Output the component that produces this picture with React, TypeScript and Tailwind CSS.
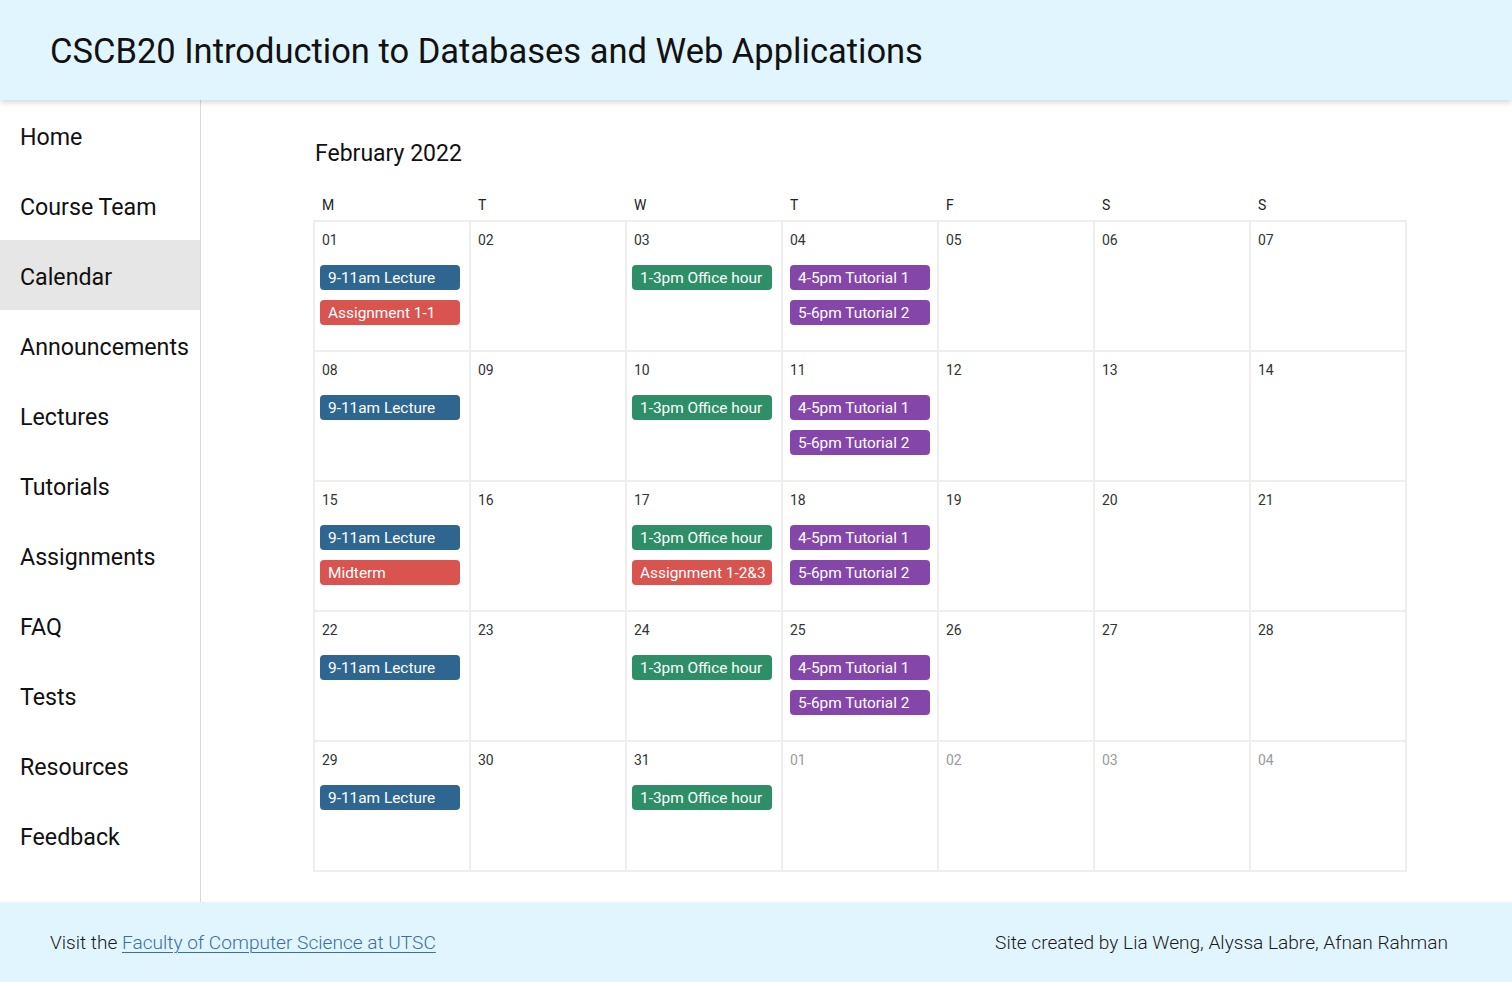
import React from 'react';

type Kind = 'lecture' | 'assignment' | 'office' | 'tutorial';

interface CalEvent {
  label: string;
  kind: Kind;
}

interface Day {
  num: string;
  muted?: boolean;
  events: CalEvent[];
}

const navItems = [
  'Home',
  'Course Team',
  'Calendar',
  'Announcements',
  'Lectures',
  'Tutorials',
  'Assignments',
  'FAQ',
  'Tests',
  'Resources',
  'Feedback',
];

const weekdays = ['M', 'T', 'W', 'T', 'F', 'S', 'S'];

const kindClass: Record<Kind, string> = {
  lecture: 'bg-[#2e6690]',
  assignment: 'bg-[#d9534f]',
  office: 'bg-[#2e8e67]',
  tutorial: 'bg-[#8446a8]',
};

const lecture: CalEvent = { label: '9-11am Lecture', kind: 'lecture' };
const office: CalEvent = { label: '1-3pm Office hour', kind: 'office' };
const tut1: CalEvent = { label: '4-5pm Tutorial 1', kind: 'tutorial' };
const tut2: CalEvent = { label: '5-6pm Tutorial 2', kind: 'tutorial' };

const buildDays = (): Day[] => {
  const days: Day[] = [];
  for (let i = 1; i <= 28; i++) {
    const dow = (i - 1) % 7;
    const events: CalEvent[] = [];
    if (dow === 0) events.push(lecture);
    if (dow === 2) events.push(office);
    if (dow === 3) events.push(tut1, tut2);
    if (i === 1) events.push({ label: 'Assignment 1-1', kind: 'assignment' });
    if (i === 15) events.push({ label: 'Midterm', kind: 'assignment' });
    if (i === 17) events.push({ label: 'Assignment 1-2&3', kind: 'assignment' });
    days.push({ num: String(i).padStart(2, '0'), events });
  }
  // last row spills over into March
  days.push({ num: '29', events: [lecture] });
  days.push({ num: '30', events: [] });
  days.push({ num: '31', events: [office] });
  ['01', '02', '03', '04'].forEach(n => days.push({ num: n, muted: true, events: [] }));
  return days;
};

const days = buildDays();

const DayCell: React.FC<{ day: Day; col: number }> = ({ day, col }) => (
  <div className="h-[130px] border-r-2 border-b-2 border-[#eeeeee] pt-[10px]">
    <div
      className={`pl-[7px] text-[14px] leading-[16px] ${day.muted ? 'text-[#9a9a9a]' : 'text-[#333333]'}`}
    >
      {day.num}
    </div>
    <div className={`mt-[17px] flex flex-col gap-[10px] ${col === 3 ? 'ml-[7px]' : 'ml-[5px]'}`}>
      {day.events.map((ev, idx) => (
        <div
          key={idx}
          className={`w-[140px] h-[25px] rounded-[4px] pl-[8px] pt-[1px] text-[15.4px] leading-[25px] text-white whitespace-nowrap overflow-hidden ${kindClass[ev.kind]}`}
        >
          {ev.label}
        </div>
      ))}
    </div>
  </div>
);

export default function App() {
  return (
    <div className="min-h-screen flex flex-col bg-white text-[#111111] font-['Roboto','Liberation_Sans',sans-serif]">
      <header className="relative z-10 h-[100px] flex items-center px-[50px] bg-[#e1f5fe] shadow-[0_2px_6px_rgba(0,0,0,0.18)]">
        <h1 className="text-[34.5px] leading-none pt-[2px]">
          CSCB20 Introduction to Databases and Web Applications
        </h1>
      </header>

      <div className="flex">
        <nav className="w-[201px] shrink-0 border-r border-[#d9d9d9]">
          {navItems.map(item => (
            <div
              key={item}
              className={`h-[70px] flex items-center pl-[20px] pt-[4px] text-[23.2px] ${item === 'Calendar' ? 'bg-[#e6e6e6]' : ''}`}
            >
              {item}
            </div>
          ))}
        </nav>

        <main className="flex-1 pl-[112px] pt-[37px] pb-[30px]">
          <h2 className="text-[23px] leading-[34px] pl-[2px]">February 2022</h2>
          <div className="mt-[25px] mb-[6px] w-[1094px] grid grid-cols-[2px_repeat(7,156px)] text-[14px] leading-[18px] text-[#222222]">
            <div />
            {weekdays.map((d, i) => (
              <div key={i} className="pl-[7px]">
                {d}
              </div>
            ))}
          </div>
          <div className="w-[1094px] border-l-2 border-t-2 border-[#eeeeee] grid grid-cols-[repeat(7,156px)]">
            {days.map((day, i) => (
              <DayCell key={i} day={day} col={i % 7} />
            ))}
          </div>
        </main>
      </div>

      <footer className="h-[80px] flex items-center justify-between pl-[50px] pr-[64px] bg-[#e1f5fe] text-[19.1px] font-light text-[#1a1a1a]">
        <div className="pt-[2px]">
          Visit the{' '}
          <a href="#" className="text-[#3a6f9e] underline underline-offset-[3px] decoration-1">
            Faculty of Computer Science at UTSC
          </a>
        </div>
        <div className="pt-[2px]">Site created by Lia Weng, Alyssa Labre, Afnan Rahman</div>
      </footer>
    </div>
  );
}
